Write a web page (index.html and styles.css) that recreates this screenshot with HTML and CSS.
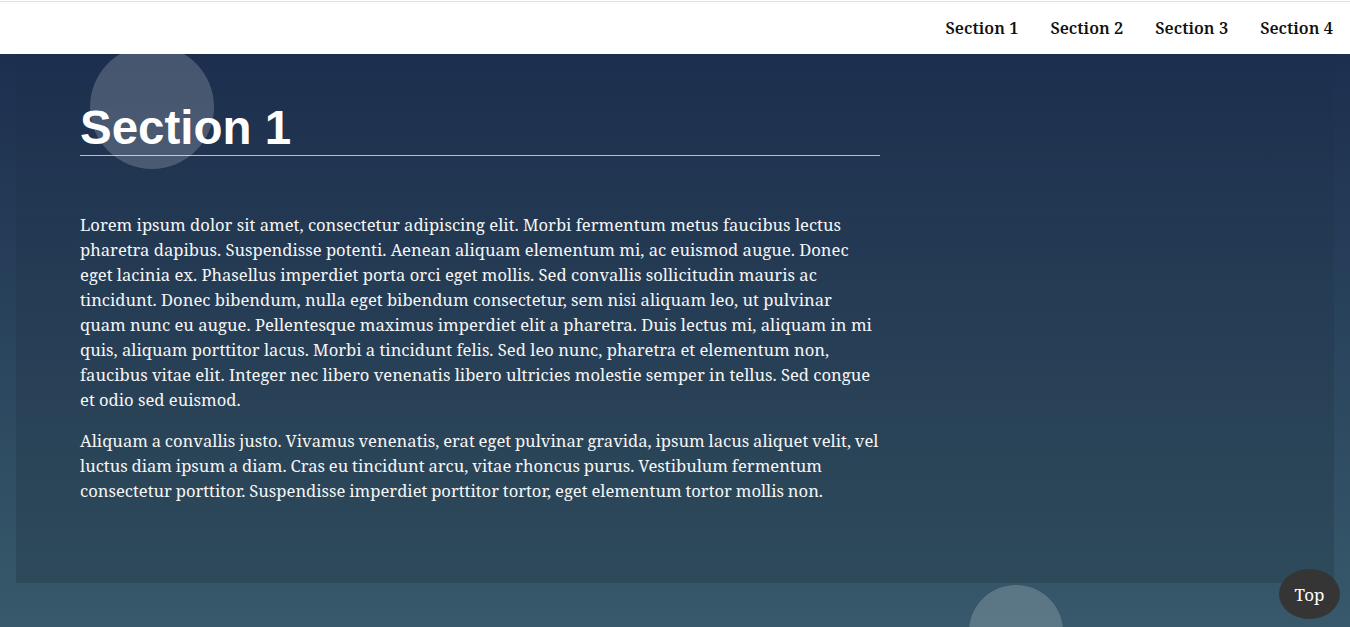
FILE: index.html
```html
<!DOCTYPE html>
<html lang="en">
<head>
<meta charset="utf-8">
<title>Sections</title>
<link rel="stylesheet" href="styles.css">
</head>
<body>
<header class="site-header">
  <nav class="nav">
    <a class="nav-link" href="#s1">Section 1</a>
    <a class="nav-link" href="#s2">Section 2</a>
    <a class="nav-link" href="#s3">Section 3</a>
    <a class="nav-link" href="#s4">Section 4</a>
  </nav>
</header>
<main class="main">
  <section class="section" id="s1">
    <h1 class="section-title">Section 1</h1>
    <p class="text">Lorem ipsum dolor sit amet, consectetur adipiscing elit. Morbi fermentum metus faucibus lectus pharetra dapibus. Suspendisse potenti. Aenean aliquam elementum mi, ac euismod augue. Donec eget lacinia ex. Phasellus imperdiet porta orci eget mollis. Sed convallis sollicitudin mauris ac tincidunt. Donec bibendum, nulla eget bibendum consectetur, sem nisi aliquam leo, ut pulvinar quam nunc eu augue. Pellentesque maximus imperdiet elit a pharetra. Duis lectus mi, aliquam in mi quis, aliquam porttitor lacus. Morbi a tincidunt felis. Sed leo nunc, pharetra et elementum non, faucibus vitae elit. Integer nec libero venenatis libero ultricies molestie semper in tellus. Sed congue et odio sed euismod.</p>
    <p class="text text-snug">Aliquam a convallis justo. Vivamus venenatis, erat eget pulvinar gravida, ipsum lacus aliquet velit, vel luctus diam ipsum a diam. Cras eu tincidunt arcu, vitae rhoncus purus. Vestibulum fermentum consectetur porttitor. Suspendisse imperdiet porttitor tortor, eget elementum tortor mollis non.</p>
  </section>
</main>
<div class="bubble bubble-1"></div>
<div class="bubble bubble-2"></div>
<a class="top-btn" href="#">Top</a>
</body>
</html>
```
FILE: styles.css
```css
html, body {
  margin: 0;
  padding: 0;
}

body {
  height: 100vh;
  background: linear-gradient(#1a2b4c, #37596b);
  font-family: "Noto Serif", "DejaVu Serif", serif;
  overflow: hidden;
}

.site-header {
  position: relative;
  z-index: 3;
  height: 54px;
  box-sizing: border-box;
  background: linear-gradient(#fff 0 1px, #e1e1e1 1px 2px, #fff 2px);
  display: flex;
  justify-content: flex-end;
  align-items: center;
  padding: 0 17px 0 0;
}

.nav {
  display: flex;
  gap: 32px;
}

.nav-link {
  color: #111;
  text-decoration: none;
  font-family: "Noto Serif", "DejaVu Serif", serif;
  font-weight: 600;
  font-size: 16.4px;
}

.main {
  position: relative;
  z-index: 2;
}

.section {
  margin: 0 16px;
  padding: 46px 64px 64px;
  background: linear-gradient(rgba(0, 0, 0, 0.01), rgba(0, 0, 0, 0.14));
  color: #f6f6f6;
}

.section-title {
  margin: 0 0 56px;
  max-width: 800px;
  font-family: "Liberation Sans", Arial, sans-serif;
  font-weight: 700;
  font-size: 47.5px;
  line-height: 55px;
  color: #fff;
  border-bottom: 1px solid #d2d41e;
}

.text {
  margin: 0 0 16px;
  max-width: 800px;
  font-size: 16.6px;
  line-height: 25px;
}

.text-snug {
  word-spacing: -0.5px;
}

.bubble {
  position: absolute;
  z-index: 2;
  border-radius: 50%;
  background: rgba(255, 255, 255, 0.19);
  pointer-events: none;
}

.bubble-1 {
  left: 90px;
  top: 45px;
  width: 124px;
  height: 124px;
}

.bubble-2 {
  left: 969px;
  top: 585px;
  width: 94px;
  height: 94px;
}

.top-btn {
  position: fixed;
  z-index: 4;
  right: 10px;
  bottom: 8px;
  width: 61px;
  height: 50px;
  border-radius: 50%;
  background: #353535;
  color: #fff;
  text-decoration: none;
  display: flex;
  align-items: center;
  justify-content: center;
  font-family: "Noto Serif", "DejaVu Serif", serif;
  font-size: 17px;
}
```
